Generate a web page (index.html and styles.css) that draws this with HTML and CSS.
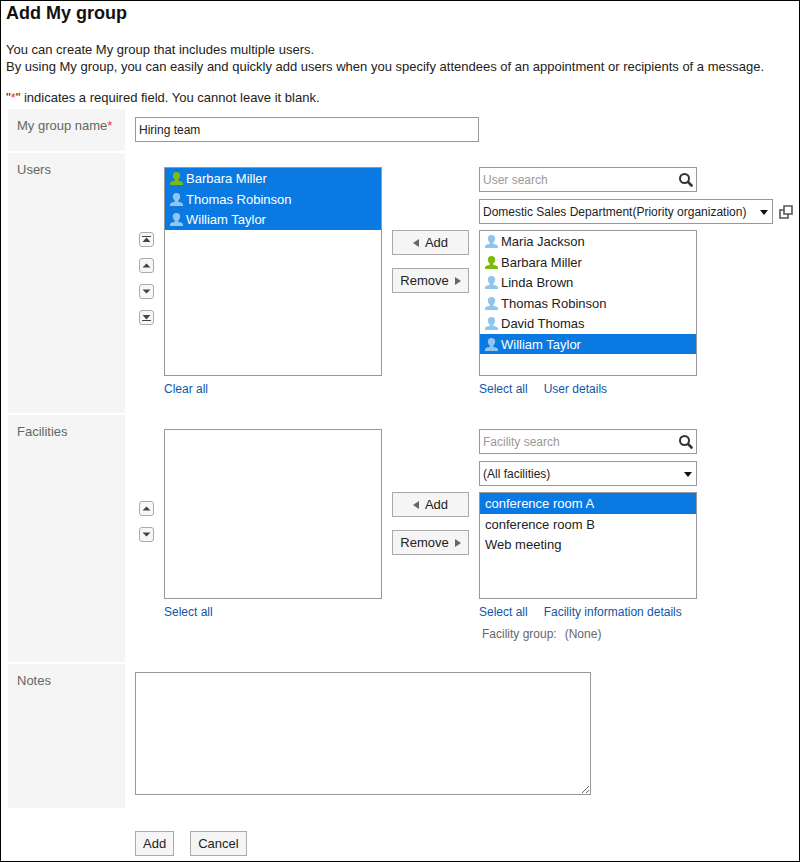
FILE: index.html
```html
<!DOCTYPE html>
<html lang="en">
<head>
    <meta charset="UTF-8">
    <meta name="viewport" content="width=device-width, initial-scale=1.0">
    <title>Add My group</title>
    <link rel="stylesheet" href="styles.css">
</head>
<body>
    <!-- Shared icons -->
    <svg class="sprite" aria-hidden="true">
        <symbol id="icon-user" viewBox="0 0 13 13">
            <path d="M6.500 0C4 0 2.800 1.500 2.800 3.500c0 1.700.8 3.200 1.900 4v1.200C3.300 9.300.4 9.400 0 11.300V13h13v-1.700c-.4-1.900-3.300-2-4.700-2.600V7.500c1.100-.8 1.900-2.300 1.900-4C10.200 1.500 9 0 6.500 0z"/>
        </symbol>
        <symbol id="icon-search" viewBox="0 0 14 14">
            <circle cx="5.500" cy="5.500" r="4.500" fill="none" stroke="#333" stroke-width="2"/>
            <path d="M9.200 9.200l3.300 3.300" stroke="#333" stroke-width="2.600" stroke-linecap="round"/>
        </symbol>
        <symbol id="icon-caret" viewBox="0 0 8 5">
            <path d="M0 0h8L4 5z" fill="#111"/>
        </symbol>
        <symbol id="icon-up" viewBox="0 0 9 9">
            <path d="M4.500 2.500L8.500 6.500h-8z" fill="#444"/>
        </symbol>
        <symbol id="icon-down" viewBox="0 0 9 9">
            <path d="M4.500 6.500L8.500 2.500h-8z" fill="#444"/>
        </symbol>
        <symbol id="icon-top" viewBox="0 0 9 9">
            <path d="M0 1h9v1H0zM4.500 2.500L8.500 7h-8z" fill="#444"/>
        </symbol>
        <symbol id="icon-bottom" viewBox="0 0 9 9">
            <path d="M0 7h9v1H0zM4.500 6.500L8.500 2h-8z" fill="#444"/>
        </symbol>
        <symbol id="icon-left" viewBox="0 0 6 8">
            <path d="M6 0v8L0 4z" fill="#666"/>
        </symbol>
        <symbol id="icon-right" viewBox="0 0 6 8">
            <path d="M0 0v8l6-4z" fill="#666"/>
        </symbol>
    </svg>

    <main class="page">
        <h1 class="page-title">Add My group</h1>
        <p class="intro">You can create My group that includes multiple users.<br>By using My group, you can easily and quickly add users when you specify attendees of an appointment or recipients of a message.</p>
        <p class="required-note">"<span class="required">*</span>" indicates a required field. You cannot leave it blank.</p>

        <form class="group-form">
            <div class="form-row row-name">
                <label class="row-label" for="groupName">My group name<span class="required">*</span></label>
                <div class="row-body">
                    <input class="text-input name-input" type="text" id="groupName" value="Hiring team" required>
                </div>
            </div>

            <div class="form-row row-users">
                <div class="row-label" id="usersLabel">Users</div>
                <div class="row-body picker" role="group" aria-labelledby="usersLabel">
                    <div class="order-buttons">
                        <button class="order-btn" type="button" aria-label="Move to top"><svg class="order-icon"><use href="#icon-top"/></svg></button>
                        <button class="order-btn" type="button" aria-label="Move up"><svg class="order-icon"><use href="#icon-up"/></svg></button>
                        <button class="order-btn" type="button" aria-label="Move down"><svg class="order-icon"><use href="#icon-down"/></svg></button>
                        <button class="order-btn" type="button" aria-label="Move to bottom"><svg class="order-icon"><use href="#icon-bottom"/></svg></button>
                    </div>
                    <ul class="list">
                        <li><label class="item"><input class="item-check" type="checkbox" checked><svg class="user-icon me"><use href="#icon-user"/></svg>Barbara Miller</label></li>
                        <li><label class="item"><input class="item-check" type="checkbox" checked><svg class="user-icon"><use href="#icon-user"/></svg>Thomas Robinson</label></li>
                        <li><label class="item"><input class="item-check" type="checkbox" checked><svg class="user-icon"><use href="#icon-user"/></svg>William Taylor</label></li>
                    </ul>
                    <div class="move-buttons">
                        <button class="btn" type="button"><svg class="btn-icon"><use href="#icon-left"/></svg>Add</button>
                        <button class="btn" type="button">Remove<svg class="btn-icon"><use href="#icon-right"/></svg></button>
                    </div>
                    <div class="candidates">
                        <div class="search">
                            <input class="text-input search-input" type="text" placeholder="User search" aria-label="User search">
                            <button class="search-btn" type="button" aria-label="Search"><svg class="search-icon"><use href="#icon-search"/></svg></button>
                        </div>
                        <div class="select-line">
                            <div class="select-wrap select-wide">
                                <select class="select" aria-label="Organization">
                                    <option>Domestic Sales Department(Priority organization)</option>
                                </select>
                                <svg class="caret"><use href="#icon-caret"/></svg>
                            </div>
                            <button class="popup-btn" type="button" aria-label="Select organization">
                                <svg class="popup-icon" viewBox="0 0 14 14" fill="none" stroke="#555" stroke-width="1.600"><path d="M5 1h8v8H5zM4.500 5H1v8h8v-3.500"/></svg>
                            </button>
                        </div>
                        <ul class="list list-users">
                            <li><label class="item"><input class="item-check" type="checkbox"><svg class="user-icon"><use href="#icon-user"/></svg>Maria Jackson</label></li>
                            <li><label class="item"><input class="item-check" type="checkbox"><svg class="user-icon me"><use href="#icon-user"/></svg>Barbara Miller</label></li>
                            <li><label class="item"><input class="item-check" type="checkbox"><svg class="user-icon"><use href="#icon-user"/></svg>Linda Brown</label></li>
                            <li><label class="item"><input class="item-check" type="checkbox"><svg class="user-icon"><use href="#icon-user"/></svg>Thomas Robinson</label></li>
                            <li><label class="item"><input class="item-check" type="checkbox"><svg class="user-icon"><use href="#icon-user"/></svg>David Thomas</label></li>
                            <li><label class="item"><input class="item-check" type="checkbox" checked><svg class="user-icon"><use href="#icon-user"/></svg>William Taylor</label></li>
                        </ul>
                    </div>
                    <div class="links links-selected"><a href="#">Clear all</a></div>
                    <div class="links links-candidates"><a href="#">Select all</a><a href="#">User details</a></div>
                </div>
            </div>

            <div class="form-row row-facilities">
                <div class="row-label" id="facilitiesLabel">Facilities</div>
                <div class="row-body picker" role="group" aria-labelledby="facilitiesLabel">
                    <div class="order-buttons">
                        <button class="order-btn" type="button" aria-label="Move up"><svg class="order-icon"><use href="#icon-up"/></svg></button>
                        <button class="order-btn" type="button" aria-label="Move down"><svg class="order-icon"><use href="#icon-down"/></svg></button>
                    </div>
                    <ul class="list"></ul>
                    <div class="move-buttons">
                        <button class="btn" type="button"><svg class="btn-icon"><use href="#icon-left"/></svg>Add</button>
                        <button class="btn" type="button">Remove<svg class="btn-icon"><use href="#icon-right"/></svg></button>
                    </div>
                    <div class="candidates">
                        <div class="search">
                            <input class="text-input search-input" type="text" placeholder="Facility search" aria-label="Facility search">
                            <button class="search-btn" type="button" aria-label="Search"><svg class="search-icon"><use href="#icon-search"/></svg></button>
                        </div>
                        <div class="select-line">
                            <div class="select-wrap">
                                <select class="select" aria-label="Facility group">
                                    <option>(All facilities)</option>
                                </select>
                                <svg class="caret"><use href="#icon-caret"/></svg>
                            </div>
                        </div>
                        <ul class="list list-facilities">
                            <li><label class="item"><input class="item-check" type="checkbox" checked>conference room A</label></li>
                            <li><label class="item"><input class="item-check" type="checkbox">conference room B</label></li>
                            <li><label class="item"><input class="item-check" type="checkbox">Web meeting</label></li>
                        </ul>
                    </div>
                    <div class="links links-selected"><a href="#">Select all</a></div>
                    <div class="links links-candidates"><a href="#">Select all</a><a href="#">Facility information details</a></div>
                    <div class="facility-group"><span>Facility group:</span><span>(None)</span></div>
                </div>
            </div>

            <div class="form-row row-notes">
                <label class="row-label" for="notes">Notes</label>
                <div class="row-body">
                    <textarea class="notes-input" id="notes"></textarea>
                </div>
            </div>

            <div class="form-actions">
                <button class="btn" type="submit">Add</button>
                <button class="btn" type="button">Cancel</button>
            </div>
        </form>
    </main>
</body>
</html>
```
FILE: styles.css
```css
* {
    box-sizing: border-box;
}
body {
    margin: 0;
    min-height: 100vh;
    border: 1px solid #000;
    background: #fff;
    color: #222;
    font-family: "Liberation Sans", Arial, sans-serif;
    font-size: 13px;
    line-height: 17px;
}
button, input, select, textarea {
    margin: 0;
    color: inherit;
    font-family: inherit;
    font-size: 13px;
}
.sprite {
    display: none;
}
.page {
    padding: 0 5px 4px;
}
.page-title {
    margin: 0;
    font-size: 18px;
    line-height: 24px;
    color: #111;
}
.intro {
    margin: 16px 0 14px;
}
.required-note {
    margin: 0;
}
.required {
    color: #e33;
}

/* Form rows */
.group-form {
    display: flex;
    flex-direction: column;
    gap: 2px;
    margin: 3px 0 0 2px;
}
.form-row {
    display: grid;
    grid-template-columns: 117px 1fr;
}
.row-label {
    padding: 8px 9px;
    background: #f5f5f5;
    color: #666;
}
.row-body {
    padding: 8px 0 13px 10px;
}
.row-name {
    min-height: 42px;
}
.row-name .row-body {
    padding-bottom: 8px;
}
.text-input {
    height: 25px;
    padding: 0 3px;
    border: 1px solid #999;
    background: #fff;
    font-size: 12px;
}
.name-input {
    display: block;
    width: 344px;
    max-width: 100%;
}

/* Picker: order buttons, selected list, move buttons, candidates */
.picker {
    display: grid;
    grid-template-columns: 15px 218px 77px 1fr;
    column-gap: 10px;
    align-content: start;
    padding: 14px 0 0 14px;
}
.row-users {
    min-height: 260px;
}
.row-facilities {
    min-height: 247px;
}
.order-buttons {
    display: flex;
    flex-direction: column;
    justify-content: center;
    gap: 11px;
    padding-top: 14px;
}
.order-btn {
    display: flex;
    align-items: center;
    justify-content: center;
    height: 15px;
    padding: 0;
    border: 1px solid #aaa;
    border-radius: 3px;
    background: #f8f8f8;
}
.order-icon {
    flex: none;
    width: 9px;
    height: 9px;
}
.list {
    display: grid;
    grid-auto-rows: 21px 20px;
    align-content: start;
    width: 218px;
    margin: 0;
    padding: 0;
    border: 1px solid #999;
    list-style: none;
    overflow: auto;
}
.list-users {
    height: 146px;
}
.list-facilities {
    height: 107px;
}
.item {
    position: relative;
    display: flex;
    align-items: center;
    gap: 3px;
    height: 100%;
    padding: 0 5px;
}
.item:has(:checked) {
    background: #0a7ae2;
    color: #fff;
}
.item-check {
    position: absolute;
    opacity: 0;
}
.user-icon {
    width: 13px;
    height: 13px;
    fill: #90c5ee;
}
.user-icon.me {
    fill: #7ebc0a;
}
.move-buttons {
    display: flex;
    flex-direction: column;
    gap: 13px;
    padding-top: 63px;
}
.btn {
    display: flex;
    align-items: center;
    justify-content: center;
    gap: 6px;
    height: 25px;
    padding: 0 7px;
    border: 1px solid #aaa;
    background: #f5f5f5;
}
.btn-icon {
    width: 6px;
    height: 8px;
}
.search {
    display: flex;
    align-items: center;
    width: 218px;
    border: 1px solid #999;
}
.search-input {
    flex: 1;
    min-width: 0;
    height: 23px;
    border: none;
}
.search-input::placeholder {
    color: #999;
}
.search-btn {
    display: flex;
    padding: 0 3px;
    border: none;
    background: none;
}
.search-icon {
    width: 14px;
    height: 14px;
}
.select-line {
    display: flex;
    align-items: center;
    gap: 6px;
    margin: 7px 0 6px;
}
.select-wrap {
    position: relative;
    width: 218px;
}
.select-wide {
    width: 294px;
}
.select {
    display: block;
    appearance: none;
    width: 100%;
    height: 25px;
    padding: 0 14px 0 3px;
    border: 1px solid #999;
    border-radius: 0;
    background: #fff;
    font-size: 12px;
}
.caret {
    position: absolute;
    top: 11px;
    right: 5px;
    width: 8px;
    height: 5px;
    pointer-events: none;
}
.popup-btn {
    display: flex;
    padding: 0;
    border: none;
    background: none;
}
.popup-icon {
    width: 14px;
    height: 14px;
}
.links {
    display: flex;
    gap: 16px;
    padding-top: 5px;
    font-size: 12px;
}
.links a {
    color: #15a;
    text-decoration: none;
}
.links a:hover {
    text-decoration: underline;
}
.links-selected {
    grid-column: 2;
}
.links-candidates {
    grid-column: 4;
}
.facility-group {
    grid-column: 4;
    display: flex;
    gap: 8px;
    padding: 5px 3px 0;
    color: #666;
    font-size: 12px;
}
.notes-input {
    display: block;
    width: 456px;
    max-width: 100%;
    height: 123px;
    border: 1px solid #999;
}
.form-actions {
    display: flex;
    gap: 16px;
    padding: 21px 0 0 127px;
}
```
